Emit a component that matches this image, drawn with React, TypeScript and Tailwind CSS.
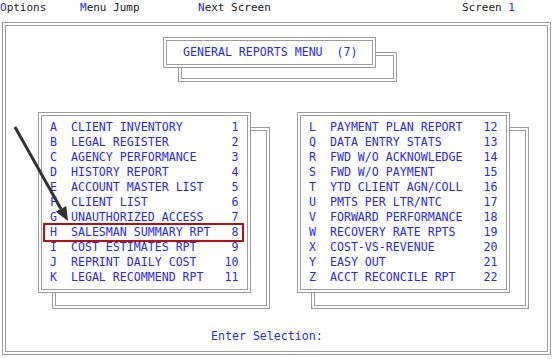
import React from "react";

const left: [string, string, number][] = [
  ["A", "CLIENT INVENTORY", 1],
  ["B", "LEGAL REGISTER", 2],
  ["C", "AGENCY PERFORMANCE", 3],
  ["D", "HISTORY REPORT", 4],
  ["E", "ACCOUNT MASTER LIST", 5],
  ["F", "CLIENT LIST", 6],
  ["G", "UNAUTHORIZED ACCESS", 7],
  ["H", "SALESMAN SUMMARY RPT", 8],
  ["I", "COST ESTIMATES RPT", 9],
  ["J", "REPRINT DAILY COST", 10],
  ["K", "LEGAL RECOMMEND RPT", 11],
];

const right: [string, string, number][] = [
  ["L", "PAYMENT PLAN REPORT", 12],
  ["Q", "DATA ENTRY STATS", 13],
  ["R", "FWD W/O ACKNOWLEDGE", 14],
  ["S", "FWD W/O PAYMENT", 15],
  ["T", "YTD CLIENT AGN/COLL", 16],
  ["U", "PMTS PER LTR/NTC", 17],
  ["V", "FORWARD PERFORMANCE", 18],
  ["W", "RECOVERY RATE RPTS", 19],
  ["X", "COST-VS-REVENUE", 20],
  ["Y", "EASY OUT", 21],
  ["Z", "ACCT RECONCILE RPT", 22],
];

const fmt = (l: string, n: string, num: number) =>
  `${l}  ${n.padEnd(22)}${String(num).padStart(2)}`;

function MenuBox({
  rows,
  highlight,
}: {
  rows: [string, string, number][];
  highlight?: string;
}) {
  return (
    <div className="relative">
      <div className="absolute left-[14px] top-[15px] w-[218px] h-[182px] border-[4px] border-double border-[#9c9c9c]" />
      <div className="relative w-[213px] h-[181px] bg-white border-[4px] border-double border-[#9c9c9c] px-[8px] py-[4px]">
        {rows.map(([l, n, num]) => (
          <div key={l} className="relative h-[15px] leading-[15px] whitespace-pre">
            {highlight === l && (
              <div className="absolute left-[-7px] right-[-5px] top-[-2px] bottom-[-2px] border-2 border-[#b80f0f]" />
            )}
            {fmt(l, n, num)}
          </div>
        ))}
      </div>
    </div>
  );
}

export default function App() {
  return (
    <div
      className="relative w-[555px] h-[359px] bg-white overflow-hidden text-[#2a2aee]"
      style={{ fontFamily: '"DejaVu Sans Mono", "Liberation Mono", monospace' }}
    >
      <div className="h-[15px] leading-[15px] text-[11px] text-[#222] flex whitespace-pre">
        <span className="w-[80px]">
          <span className="text-[#2a2aee]">O</span>ptions
        </span>
        <span className="w-[118px]">
          <span className="text-[#2a2aee]">M</span>enu Jump
        </span>
        <span className="w-[264px]">
          <span className="text-[#2a2aee]">N</span>ext Screen
        </span>
        <span>
          Screen <span className="text-[#2a2aee]">1</span>
        </span>
      </div>

      <div className="mt-[7px] ml-[2px] w-[549px] h-[333px] border-[4px] border-double border-[#9c9c9c] text-[11.6px]">
        <div className="mt-[11px] ml-[157px] relative w-[213px] h-[31px]">
          <div className="absolute left-[15px] top-[15px] w-[219px] h-[30px] border-[4px] border-double border-[#9c9c9c]" />
          <div className="relative w-[213px] h-[31px] bg-white border-[4px] border-double border-[#9c9c9c] pl-[16px] leading-[23px] whitespace-pre">
            GENERAL REPORTS MENU  (7)
          </div>
        </div>

        <div className="mt-[44px] ml-[32px] flex gap-[46px]">
          <MenuBox rows={left} highlight="H" />
          <MenuBox rows={right} />
        </div>

        <div className="mt-[36px] ml-[205px] leading-[15px] whitespace-pre">Enter Selection:</div>
      </div>

      <svg className="absolute left-0 top-0" width="555" height="359">
        <line x1="15" y1="127" x2="61" y2="209" stroke="#333" strokeWidth="3" />
        <polygon points="68,221 55.9,211.7 66.3,205.9" fill="#333" />
      </svg>
    </div>
  );
}
